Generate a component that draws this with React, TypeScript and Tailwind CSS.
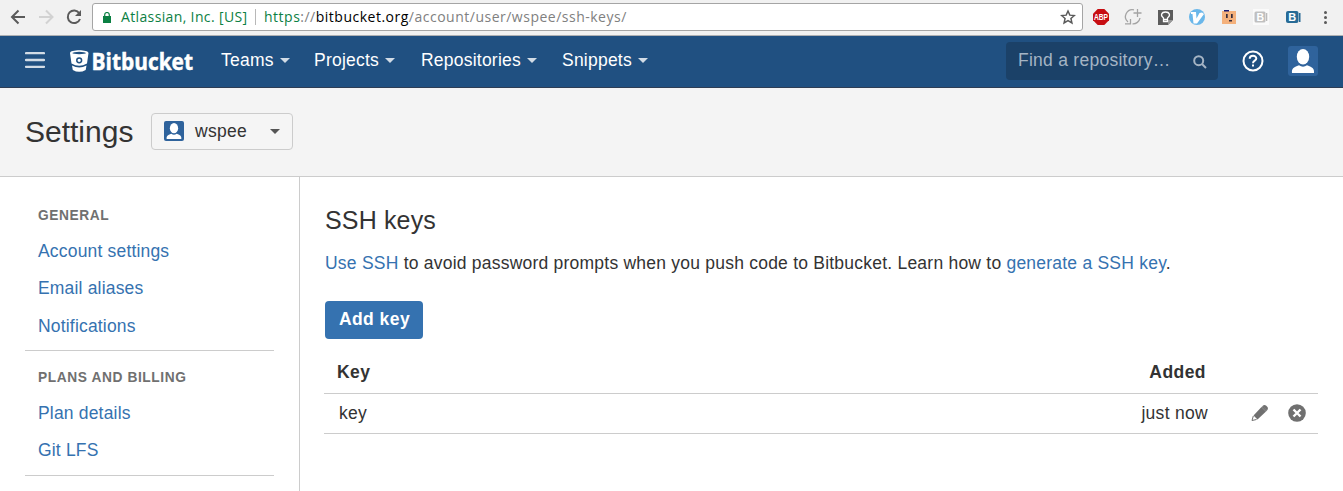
import React from 'react';

const T = 'whitespace-nowrap leading-none';

function Caret({ className }: { className: string }) {
  return (
    <svg viewBox="0 0 10 5" className={`h-[5px] w-[10px] shrink-0 ${className}`}>
      <path d="M0 0H10L5 5Z" fill="currentColor" />
    </svg>
  );
}

function Person({ className }: { className: string }) {
  return (
    <svg viewBox="0 0 30 30" className={className}>
      <rect width="30" height="30" rx="3" fill="#2f639c" />
      <ellipse cx="15" cy="10.8" rx="6.2" ry="7.700" fill="#fff" />
      <path d="M4 27C3.600 22.600 5.200 21.700 11 19.300Q15 22.200 19 19.300C24.800 21.700 26.400 22.600 26 27Z" fill="#fff" />
    </svg>
  );
}

function BrowserBar() {
  return (
    <div className="flex h-9 shrink-0 items-start border-b border-[#aeb0b3] bg-[#f1f1f1]">
      <svg viewBox="0 0 92 34" className="h-[34px] w-[92px] shrink-0" fill="none" strokeWidth="2">
        <path d="M25 17H12.500M18.500 10.500L12 17L18.500 23.500" stroke="#5a5a5a" />
        <path d="M39 17H52M46 10.500L52.500 17L46 23.500" stroke="#d2d2d2" />
        <path d="M79.300 13.200A6.300 6.300 0 1 0 80 19" stroke="#5a5a5a" />
        <path d="M81 10V16H75Z" fill="#5a5a5a" />
      </svg>
      <div className="mt-[3px] flex h-7 w-[991px] shrink-0 items-center rounded-[3px] border border-[#a5a5a5] bg-white pl-[10px] font-['Open_Sans',sans-serif] text-[14px]">
        <svg viewBox="0 0 8 11" className="h-[11px] w-2 shrink-0">
          <path d="M0 4H8V11H0Z" fill="#0b8043" />
          <path d="M1.700 4V2.800A2.300 2.300 0 0 1 6.300 2.800V4" fill="none" stroke="#0b8043" strokeWidth="1.200" />
        </svg>
        <span className="ml-[10px] w-[127px] whitespace-nowrap leading-none tracking-[0.360px] text-[#0b8043]">Atlassian, Inc. [US]</span>
        <span className="ml-[7px] h-4 w-px bg-[#b8b8b8]" />
        <span className="ml-2 whitespace-nowrap leading-none tracking-[0.500px] text-[#808080]">
          <span className="text-[#0b8043]">https</span>://<span className="text-black">bitbucket.org</span>/account/user/wspee/ssh-keys/
        </span>
        <svg viewBox="0 0 24 24" className="ml-auto mr-[6px] h-4 w-4" fill="none" stroke="#5a5a5a" strokeWidth="2.200">
          <path d="M12 3L14.700 9.200L21.500 9.800L16.400 14.300L17.900 21L12 17.500L6.100 21L7.600 14.300L2.500 9.800L9.300 9.200Z" />
        </svg>
      </div>
      <svg viewBox="1083 0 260 34" className="h-[34px] w-[260px] shrink-0" fontFamily="Liberation Sans, sans-serif" fontWeight="bold">
        <path d="M1097.700 9H1104.300L1109 13.700V20.300L1104.300 25H1097.700L1093 20.300V13.700Z" fill="#c70d12" />
        <text x="1094" y="20" fontSize="8.500" letterSpacing="0" textLength="14" lengthAdjust="spacingAndGlyphs" fill="#fff">ABP</text>
        <g fill="none" stroke="#a3a3a3" strokeWidth="1.300">
          <path d="M1134 9.800A7 7 0 0 0 1128 22M1125 23.800H1130.500V19M1140 18A7 7 0 0 1 1132.500 23.800M1137.500 9V17M1133.500 13H1141.500" />
        </g>
        <path d="M1158 10H1173V20L1168 25H1158Z" fill="#5c5c5c" />
        <path d="M1173 20L1168 25V20Z" fill="#999" />
        <path d="M1163.500 19V18C1160 15.500 1161.500 12 1165.500 12S1171 15.500 1167.500 18V21.500H1163.500ZM1163.500 19.500H1167.500" fill="none" stroke="#fff" strokeWidth="1.300" />
        <circle cx="1197" cy="17" r="8" fill="#6ab7ea" />
        <path d="M1191 12H1196L1196.500 18.500L1199.500 13L1202 12.500L1204 14L1197 23.500H1193.500L1192.500 14H1191Z" fill="#fff" />
        <path d="M1222 11H1236V24H1222Z" fill="#f4b17c" />
        <path d="M1224 10H1229V11.500H1224Z" fill="#1a1a70" />
        <path d="M1226 14H1227.700V18H1226ZM1231 14H1232.700V18H1231ZM1229 20H1232V21.500H1229Z" fill="#352c3c" />
        <path d="M1253 9H1269V25H1253Z" fill="#fafafa" />
        <rect x="1254.500" y="11.500" width="11" height="11" rx="1.500" fill="#c0c0c0" />
        <path d="M1266 13H1267.300V21H1266Z" fill="#bbb" />
        <text x="1256.500" y="21" fontSize="10.500" fill="#fff">B</text>
        <rect x="1286" y="11" width="12.500" height="12" rx="2" fill="#286b96" />
        <path d="M1299 13H1300.500V22H1299Z" fill="#286b96" />
        <text x="1288.300" y="21" fontSize="11" fill="#fff">B</text>
        <g fill="#5a5a5a"><circle cx="1325.500" cy="12.500" r="1.500" /><circle cx="1325.500" cy="17.500" r="1.500" /><circle cx="1325.500" cy="22.500" r="1.500" /></g>
      </svg>
    </div>
  );
}

const menus = [
  { label: 'Teams', box: 'w-[93px]' },
  { label: 'Projects', box: 'w-[107px]' },
  { label: 'Repositories', box: 'w-[141px]' },
  { label: 'Snippets', box: 'w-[112px]' },
];

function NavBar() {
  return (
    <header className="flex h-[52px] shrink-0 items-center border-b border-[#2e3d54] bg-[#205081] pb-[2px] text-[17.500px] tracking-[0.225px] text-white">
      <svg viewBox="0 0 20 16" className="mb-[2px] ml-[25px] h-4 w-5 shrink-0 text-[#d2dce6]">
        <path d="M1 1.200H19M1 8H19M1 14.800H19" stroke="currentColor" strokeWidth="2.300" strokeLinecap="round" />
      </svg>
      <svg viewBox="0 0 128 26" className="ml-[25px] h-[26px] w-[128px] shrink-0 overflow-visible">
        <path d="M0 5C0 1.300 18.500 1.300 18.500 5L17 15.500Q9.200 20 1.500 15.500ZM2 17.500Q9.200 21.500 16.500 17.500L15.700 22Q9.200 25.700 2.800 22Z" fill="#fff" />
        <ellipse cx="9.200" cy="5" rx="6.800" ry="1.200" fill="#205081" />
        <circle cx="9.200" cy="12.300" r="2.400" fill="none" stroke="#205081" strokeWidth="1.500" />
        <text x="21.500" y="22" fill="#fff" stroke="#fff" strokeWidth=".5" fontFamily="Open Sans, sans-serif" fontWeight="700" fontSize="24" letterSpacing="0" textLength="101.500" lengthAdjust="spacingAndGlyphs">Bitbucket</text>
      </svg>
      <nav className="ml-[23px] flex items-center">
        {menus.map((m) => (
          <div key={m.label} className={`flex items-center ${m.box}`}>
            <span className={T}>{m.label}</span>
            <Caret className="ml-[6px] text-[#d2dce6]" />
          </div>
        ))}
      </nav>
      <div className="ml-auto flex h-[38px] w-[212px] items-center rounded-[4px] bg-[#1b4168] pl-3 pr-[11px] tracking-[0.260px] text-[#a5b4c4]">
        <span className={T}>Find a repository…</span>
        <svg viewBox="0 0 14 14" className="ml-auto mt-[2px] h-[14px] w-[14px]" fill="none" stroke="currentColor" strokeWidth="2">
          <circle cx="5.700" cy="5.700" r="4.500" /><path d="M9 9L13 13" />
        </svg>
      </div>
      <svg viewBox="0 0 22 22" className="ml-6 h-[22px] w-[22px]" fill="none" stroke="#fff" strokeWidth="2">
        <circle cx="11" cy="11" r="9.500" /><path d="M7.700 8.800C7.700 4.800 14.300 4.800 14.300 8.600C14.300 10.800 11 10.500 11 13.200M11 14.500V16.600" />
      </svg>
      <Person className="ml-6 mr-[25px] h-[30px] w-[30px]" />
    </header>
  );
}

const groups = [
  { title: 'GENERAL', box: 'pt-[31.900px] pb-[4.600px]', items: ['Account settings', 'Email aliases', 'Notifications'] },
  { title: 'PLANS AND BILLING', box: 'pt-[19.700px] pb-[5.300px]', items: ['Plan details', 'Git LFS'] },
];

export default function App() {
  return (
    <div className="flex h-[491px] w-[1343px] flex-col overflow-hidden bg-white font-['Liberation_Sans',Arial,sans-serif] text-[17.500px] tracking-[0.225px] text-[#333]">
      <BrowserBar />
      <NavBar />
      <div className="flex h-[89px] shrink-0 items-center border-b border-[#ccc] bg-[#f4f4f4] pb-px pl-[25px]">
        <h1 className="w-[126px] whitespace-nowrap text-[30px] leading-none tracking-normal">Settings</h1>
        <button className="flex h-[37px] w-[142px] items-center rounded-[4px] border border-[#ccc] bg-[#f5f5f5] pl-3 pr-[12px] tracking-[0.260px]">
          <Person className="mb-[2px] h-5 w-5" />
          <span className="ml-[11px] whitespace-nowrap leading-none">wspee</span>
          <Caret className="ml-auto text-[#555]" />
        </button>
      </div>
      <div className="flex min-h-0 flex-1">
        <aside className="w-[300px] shrink-0 border-r border-[#ccc] px-[25px]">
          {groups.map((g) => (
            <section key={g.title} className={`border-b border-[#ccc] pl-[13px] ${g.box}`}>
              <h2 className="mb-[10px] whitespace-nowrap text-[13.750px] font-bold leading-[14px] tracking-[0.590px] text-[#707070]">{g.title}</h2>
              {g.items.map((i) => (
                <a key={i} className="block whitespace-nowrap leading-[37.500px] tracking-[0.180px] text-[#3572b0]">{i}</a>
              ))}
            </section>
          ))}
        </aside>
        <main className="flex-1 pl-[25px] pr-[25px] pt-[28px]">
          <h2 className="whitespace-nowrap text-[25px] leading-[30px] tracking-[0.150px]">SSH keys</h2>
          <p className="mt-[16px] whitespace-nowrap leading-[25px]">
            <a className="text-[#3572b0]">Use SSH</a> to avoid password prompts when you push code to Bitbucket. Learn how to <a className="text-[#3572b0]">generate a SSH key</a>.
          </p>
          <button className="mt-[25px] flex h-[38px] w-[98px] items-center justify-center rounded-[4px] bg-[#3572b0] pb-[2px] pl-px font-bold tracking-[0.450px] text-white">Add key</button>
          <div className="-ml-px mt-[14px] flex h-[41px] items-center justify-between border-b border-[#ccc] pb-[2px] pl-[13px] pr-[112px] font-bold tracking-[0.450px]">
            <span>Key</span><span>Added</span>
          </div>
          <div className="-ml-px flex h-10 items-center border-b border-[#ccc] pl-[15px] pr-[12px]">
            <span className="mr-auto">key</span><span className="tracking-[0.300px]">just now</span>
            <svg viewBox="0 0 18 18" className="mb-[2px] ml-[43px] h-[18px] w-[18px] text-[#707070]">
              <path d="M10.500 3L15 7.500L6.500 15.500L2.500 11.500ZM11.500 2Q13.200 .300 15 1.500L16.700 3.200Q17.500 5 16 6.500Z" fill="currentColor" />
              <path d="M10.500 3L12 2L16 6.500L15 7.500Z" fill="currentColor" />
              <path d="M2.300 12L1 16.500L5.500 15.500" fill="none" stroke="currentColor" strokeWidth="1" />
            </svg>
            <svg viewBox="0 0 18 18" className="mb-[2px] ml-[19px] h-[18px] w-[18px]">
              <circle cx="9" cy="9" r="8.800" fill="#707070" /><path d="M5.500 5.500L12.500 12.500M12.500 5.500L5.500 12.500" stroke="#fff" strokeWidth="2.400" />
            </svg>
          </div>
        </main>
      </div>
    </div>
  );
}
